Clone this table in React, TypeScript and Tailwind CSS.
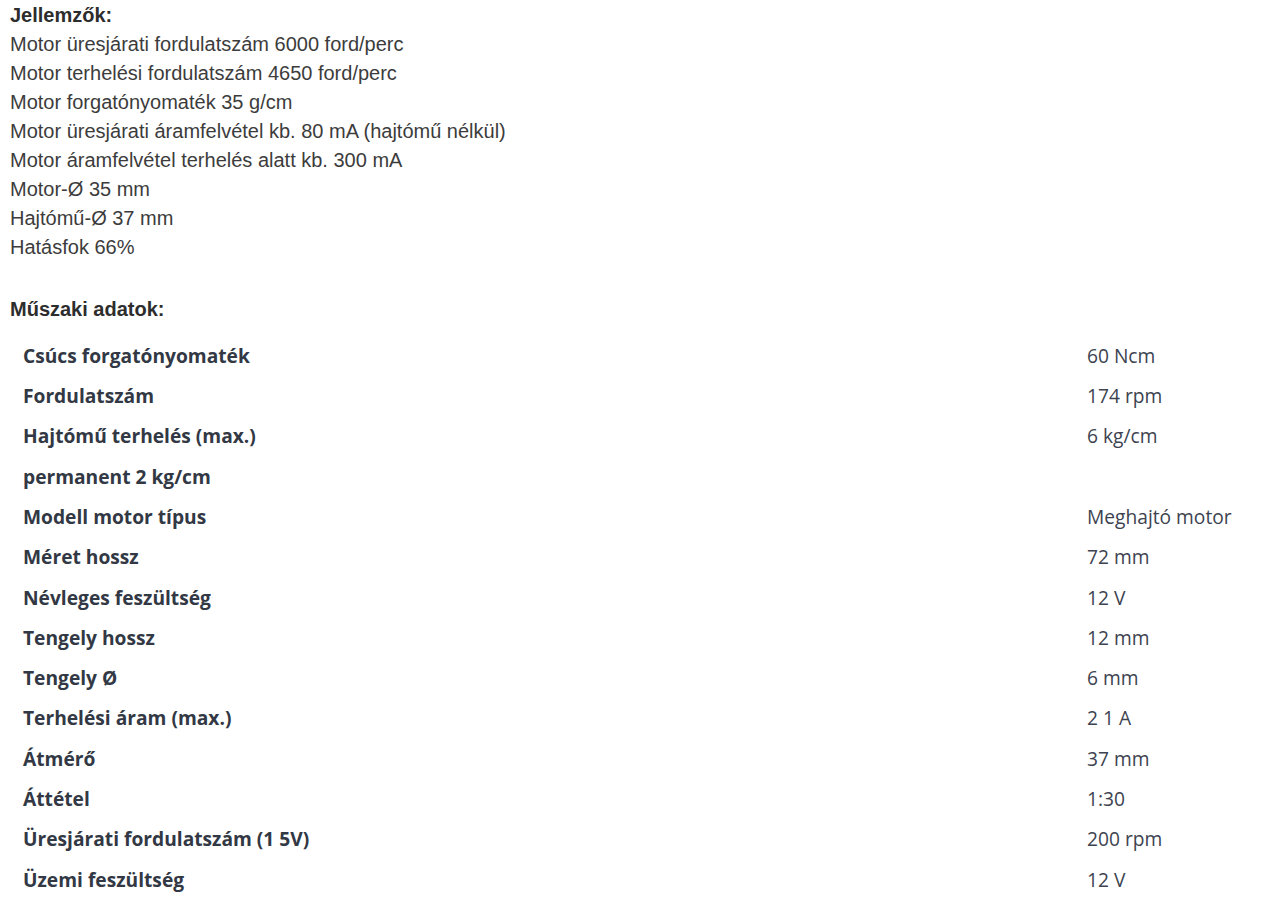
import { FC } from "react";

const features = [
  "Motor üresjárati fordulatszám 6000 ford/perc",
  "Motor terhelési fordulatszám 4650 ford/perc",
  "Motor forgatónyomaték 35 g/cm",
  "Motor üresjárati áramfelvétel kb. 80 mA (hajtómű nélkül)",
  "Motor áramfelvétel terhelés alatt kb. 300 mA",
  "Motor-Ø 35 mm",
  "Hajtómű-Ø 37 mm",
  "Hatásfok 66%",
];

const specs: [string, string][] = [
  ["Csúcs forgatónyomaték", "60 Ncm"],
  ["Fordulatszám", "174 rpm"],
  ["Hajtómű terhelés (max.)", "6 kg/cm"],
  ["permanent 2 kg/cm", ""],
  ["Modell motor típus", "Meghajtó motor"],
  ["Méret hossz", "72 mm"],
  ["Névleges feszültség", "12 V"],
  ["Tengely hossz", "12 mm"],
  ["Tengely Ø", "6 mm"],
  ["Terhelési áram (max.)", "2 1 A"],
  ["Átmérő", "37 mm"],
  ["Áttétel", "1:30"],
  ["Üresjárati fordulatszám (1 5V)", "200 rpm"],
  ["Üzemi feszültség", "12 V"],
];

const App: FC = () => {
  return (
    <div className="min-h-screen bg-white pl-[10px] pt-[1px]">
      <div className="font-['Liberation_Sans',Arial,sans-serif] text-[20px] leading-[29px] text-[#3c3c3c]">
        <h3 className="text-[20px] font-bold text-[#2d2d2d]">Jellemzők:</h3>
        {features.map((f) => (
          <div key={f}>{f}</div>
        ))}
        <h3 className="mt-[33px] text-[20px] font-bold text-[#2d2d2d]">
          Műszaki adatok:
        </h3>
      </div>

      <div className="mt-[12px] font-['Open_Sans',sans-serif] text-[19.2px] text-[#323844]">
        {specs.map(([label, value]) => (
          <div key={label} className="flex h-[40.3px] items-center">
            <div className="w-[1077px] pl-[13px] font-bold">{label}</div>
            <div className="text-[#3d4350]">{value}</div>
          </div>
        ))}
      </div>
    </div>
  );
};

App.displayName = "App";

export default App;
